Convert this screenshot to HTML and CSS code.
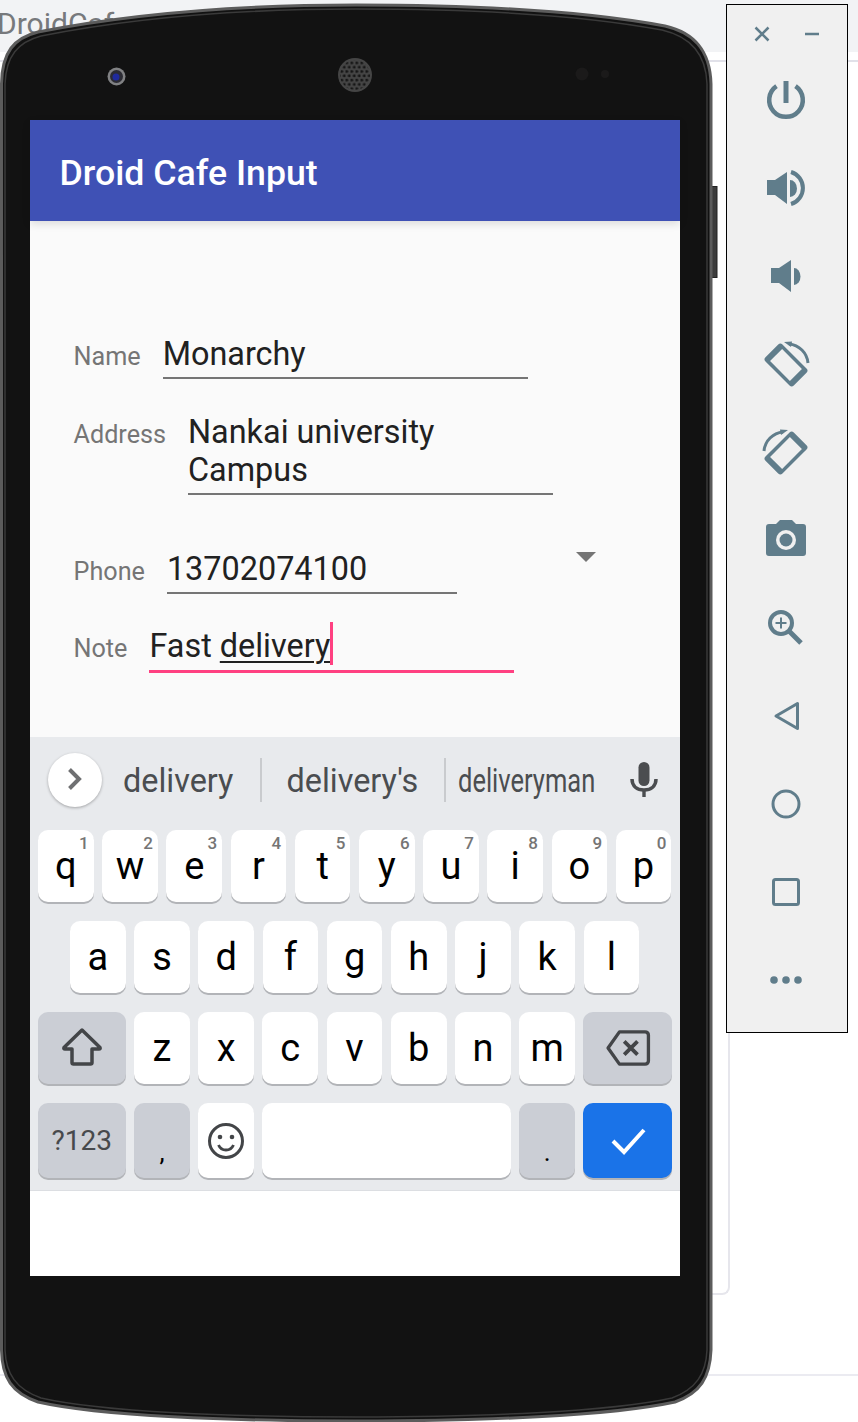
FILE: index.html
```html
<!DOCTYPE html>
<html lang="en">
<head>
  <meta charset="UTF-8">
  <meta name="viewport" content="width=device-width, initial-scale=1.0">
  <title>Droid Cafe Input</title>
  <link rel="stylesheet" href="styles.css">
</head>
<body>
  <!-- IDE behind the emulator -->
  <div class="backdrop-top"><span class="backdrop-title">DroidCafe</span></div>
  <div class="backdrop-rule"></div>
  <div class="backdrop-card"></div>
  <div class="backdrop-bottom"></div>

  <div class="phone">
    <svg class="phone-body" width="720" height="1422" viewBox="0 0 720 1422">
      <defs>
        <pattern id="grille" width="5" height="8.600" patternUnits="userSpaceOnUse" x="0.500" y="0.500">
          <circle cx="1.250" cy="2.150" r="1.500" fill="#161616"/>
          <circle cx="3.750" cy="6.450" r="1.500" fill="#161616"/>
        </pattern>
      </defs>
      <rect class="side-key" x="708" y="186.500" width="9" height="91"/>
      <path class="shell" d="M1.500 84C2 52 14 38 38 32C110 18 210 5 356 5C500 5 600 14 665 26C692 32 710 48 711 84V1350C710 1378 700 1393 675 1402C610 1416 480 1421 356 1421C230 1421 100 1416 38 1402C12 1393 2 1378 1.500 1350Z"/>
      <path class="shell-inner" d="M5 84C6 56 18 42 41 36C112 22 212 9 356 9C500 9 598 18 662 30C688 36 706 52 707 84V1350C706 1374 696 1389 672 1398C608 1412 480 1417 356 1417C232 1417 102 1412 41 1398C16 1389 6 1374 5 1350Z"/>
      <circle cx="116.500" cy="76.500" r="9" fill="#808183"/>
      <circle cx="116.500" cy="76.500" r="6.500" fill="#2b2b33"/>
      <circle cx="116" cy="77" r="3.500" fill="#1f2a9c"/>
      <circle cx="355" cy="75" r="17" fill="#454545"/>
      <circle cx="355" cy="75" r="15" fill="url(#grille)"/>
      <circle cx="582" cy="74" r="6.500" fill="#1b1a1a"/>
      <circle cx="605" cy="74" r="4" fill="#1b1a1a"/>
    </svg>

    <div class="screen">
      <header class="app-bar">Droid Cafe Input</header>

      <main class="form">
        <div class="form-row">
          <span class="form-label">Name</span>
          <div class="field">Monarchy</div>
        </div>
        <div class="form-row row-address">
          <span class="form-label">Address</span>
          <div class="field">Nankai university<br>Campus</div>
        </div>
        <div class="form-row row-phone">
          <span class="form-label">Phone</span>
          <div class="field field-short">13702074100</div>
          <span class="spinner-arrow"></span>
        </div>
        <div class="form-row row-note">
          <span class="form-label">Note</span>
          <div class="field field-active">Fast <span class="composing">delivery</span><span class="caret"></span></div>
        </div>
      </main>

      <section class="keyboard">
        <div class="suggest">
          <div class="suggest-toggle">
            <svg width="54" height="54" viewBox="0 0 54 54"><path d="M21.500 16.500L31 26L21.500 35.500" fill="none" stroke="#6f7072" stroke-width="4"/></svg>
          </div>
          <span class="word word-first">delivery</span>
          <span class="word-sep sep-first"></span>
          <span class="word word-second">delivery's</span>
          <span class="word-sep sep-second"></span>
          <span class="word word-squeezed"><span>deliveryman</span></span>
          <svg class="mic" width="30" height="38" viewBox="0 0 30 38">
            <rect x="9.500" y="1" width="11" height="24" rx="5.500" fill="#4b4d50"/>
            <path d="M3 18C3 25 8 29 15 29C22 29 27 25 27 18" fill="none" stroke="#4b4d50" stroke-width="3.500"/>
            <rect x="13.300" y="29" width="3.400" height="7" fill="#4b4d50"/>
          </svg>
        </div>

        <div class="key-rows">
          <div class="key-row">
            <div class="key">q<span class="hint">1</span></div>
            <div class="key">w<span class="hint">2</span></div>
            <div class="key">e<span class="hint">3</span></div>
            <div class="key">r<span class="hint">4</span></div>
            <div class="key">t<span class="hint">5</span></div>
            <div class="key">y<span class="hint">6</span></div>
            <div class="key">u<span class="hint">7</span></div>
            <div class="key">i<span class="hint">8</span></div>
            <div class="key">o<span class="hint">9</span></div>
            <div class="key">p<span class="hint">0</span></div>
          </div>
          <div class="key-row row-home">
            <div class="key">a</div>
            <div class="key">s</div>
            <div class="key">d</div>
            <div class="key">f</div>
            <div class="key">g</div>
            <div class="key">h</div>
            <div class="key">j</div>
            <div class="key">k</div>
            <div class="key">l</div>
          </div>
          <div class="key-row">
            <div class="key key-wide key-mod">
              <svg width="44" height="44" viewBox="0 0 44 44"><path d="M22 4L4 21.500C3.500 22.500 4 23 5 23H12V36.500C12 37.500 12.500 38 13.500 38H30.500C31.500 38 32 37.500 32 36.500V23H39C40 23 40.500 22.500 40 21.500Z" fill="none" stroke="#434548" stroke-width="3.500" stroke-linejoin="round"/></svg>
            </div>
            <div class="key">z</div>
            <div class="key">x</div>
            <div class="key">c</div>
            <div class="key">v</div>
            <div class="key">b</div>
            <div class="key">n</div>
            <div class="key">m</div>
            <div class="key key-wide key-end key-mod">
              <svg width="46" height="38" viewBox="0 0 48 40"><path d="M15 3H42C44 3 45.500 4.500 45.500 6.500V33.500C45.500 35.500 44 37 42 37H15L3 20Z" fill="none" stroke="#434548" stroke-width="3.500" stroke-linejoin="round"/><path d="M20 13L34 27M34 13L20 27" fill="none" stroke="#434548" stroke-width="4"/></svg>
            </div>
          </div>
          <div class="key-row row-bottom">
            <div class="key key-wide key-mod key-label">?123</div>
            <div class="key key-mod key-punct">,</div>
            <div class="key">
              <svg width="38" height="38" viewBox="0 0 38 38"><circle cx="19" cy="19" r="16.500" fill="none" stroke="#434548" stroke-width="3"/><circle cx="13" cy="15" r="2.300" fill="#434548"/><circle cx="25" cy="15" r="2.300" fill="#434548"/><path d="M11.500 23C13 26.500 16 28 19 28C22 28 25 26.500 26.500 23" fill="none" stroke="#434548" stroke-width="2.800"/></svg>
            </div>
            <div class="key key-space"></div>
            <div class="key key-mod key-punct">.</div>
            <div class="key key-wide key-end key-enter">
              <svg width="36" height="30" viewBox="0 0 36 30"><path d="M3 15L14 26L34 4" fill="none" stroke="#fff" stroke-width="4"/></svg>
            </div>
          </div>
        </div>
      </section>
    </div>
  </div>

  <aside class="emu-panel">
    <div class="emu-head">
      <svg class="emu-small" width="20" height="20" viewBox="0 0 20 20"><path d="M3.500 3.500L16.500 16.500M16.500 3.500L3.500 16.500"/></svg>
      <svg class="emu-small" width="20" height="20" viewBox="0 0 20 20"><path d="M3 10H17"/></svg>
    </div>
    <div class="emu-tools">
      <!-- power -->
      <svg class="tool" viewBox="0 0 48 48"><path class="line" stroke-width="4.500" d="M14.500 10.200A16.800 16.800 0 1 0 33.500 10.200"/><rect class="solid" x="21.500" y="5" width="5" height="22"/></svg>
      <!-- volume up -->
      <svg class="tool" viewBox="0 0 48 48"><path class="solid" d="M5 16H13L25 8V40L13 31H5Z"/><path class="solid" d="M28 16A7 8.500 0 0 1 28 33Z"/><path class="line" stroke-width="4" d="M29 8A16.700 16.700 0 0 1 29 40"/></svg>
      <!-- volume down -->
      <svg class="tool" viewBox="0 0 48 48"><path class="solid" d="M9 16H17L29 8V40L17 31H9Z"/><path class="solid" d="M32 16A6.500 8.500 0 0 1 32 33Z"/></svg>
      <!-- rotate left -->
      <svg class="tool" viewBox="0 0 48 48"><g transform="rotate(-45 24 25)"><rect class="solid" x="12" y="5" width="24" height="40" rx="3"/><rect class="hole" x="15.500" y="11" width="17" height="28"/></g><path class="line" stroke-width="3" d="M27 4A21 21 0 0 1 46 23"/><path class="solid" d="M22 2L30 1.500L29 7Z"/></svg>
      <!-- rotate right -->
      <svg class="tool" viewBox="0 0 48 48"><g transform="rotate(45 24 25)"><rect class="solid" x="12" y="5" width="24" height="40" rx="3"/><rect class="hole" x="15.500" y="11" width="17" height="28"/></g><path class="line" stroke-width="3" d="M2 23A21 21 0 0 1 21 4"/><path class="solid" d="M26 2L18 1.500L19 7Z"/></svg>
      <!-- camera -->
      <svg class="tool" viewBox="0 0 48 48"><path class="solid" d="M7 8H14L18 4H30L34 8H41C43 8 44 9 44 11V37C44 39 43 40 41 40H7C5 40 4 39 4 37V11C4 9 5 8 7 8Z"/><circle class="hole" cx="24" cy="24" r="10"/><circle class="solid" cx="24" cy="24" r="6.500"/></svg>
      <!-- zoom -->
      <svg class="tool" viewBox="0 0 48 48"><circle class="line" stroke-width="4" cx="19" cy="19" r="11"/><path class="line" stroke-width="2" d="M19 13.500V24.500M13.500 19H24.500"/><path class="line" stroke-width="5" d="M27.500 27.500L39 39"/></svg>
      <!-- back -->
      <svg class="tool" viewBox="0 0 48 48"><path class="line" stroke-width="3" stroke-linejoin="round" d="M14 24L35.500 11.500V36.500Z"/></svg>
      <!-- home -->
      <svg class="tool" viewBox="0 0 48 48"><circle class="line" stroke-width="3" cx="24" cy="24" r="13"/></svg>
      <!-- overview -->
      <svg class="tool" viewBox="0 0 48 48"><rect class="line" stroke-width="3" x="11.500" y="11.500" width="25" height="25" rx="2"/></svg>
      <!-- more -->
      <svg class="tool" viewBox="0 0 48 48"><circle class="solid" cx="12" cy="24" r="3.800"/><circle class="solid" cx="24" cy="24" r="3.800"/><circle class="solid" cx="36" cy="24" r="3.800"/></svg>
    </div>
  </aside>
</body>
</html>
```

FILE: styles.css
```css
html, body {
  margin: 0;
  padding: 0;
}

body {
  position: relative;
  width: 858px;
  height: 1422px;
  overflow: hidden;
  background: #fff;
  font-family: Roboto, "Liberation Sans", sans-serif;
}

/* ide behind the phone */
.backdrop-top {
  height: 52px;
  background: #f2f3f5;
  overflow: hidden;
}

.backdrop-title {
  display: block;
  margin-left: -3px;
  padding-top: 6px;
  font-size: 30px;
  line-height: 36px;
  color: #77797c;
}

.backdrop-rule {
  height: 2px;
  margin-top: 8px;
  background: #e1e1e9;
}

.backdrop-card {
  width: 728px;
  height: 1231px;
  border-right: 2px solid #e6e6ec;
  border-bottom: 2px solid #e6e6ec;
  border-bottom-right-radius: 8px;
}

.backdrop-bottom {
  height: 2px;
  margin-top: 79px;
  background: #ebebf1;
}

/* phone */
.phone {
  position: absolute;
  left: 0;
  top: 0;
  width: 720px;
  height: 1422px;
  padding: 120px 0 0 30px;
  box-sizing: border-box;
}

.phone-body {
  position: absolute;
  left: 0;
  top: 0;
}

.shell {
  fill: #121212;
  stroke: #5c5c5c;
  stroke-width: 3;
}

.shell-inner {
  fill: #121212;
  stroke: #3a3a3a;
  stroke-width: 1.5;
}

.side-key {
  fill: #3c3c3c;
  stroke: #222;
}

.screen {
  position: relative;
  width: 650px;
  height: 1156px;
  background: #fff;
}

.app-bar {
  position: relative;
  height: 101px;
  padding: 4px 0 0 29.5px;
  box-sizing: border-box;
  display: flex;
  align-items: center;
  background: #3f51b5;
  color: #fff;
  font-size: 35.7px;
  font-weight: 500;
  box-shadow: 0 3px 8px rgba(0, 0, 0, 0.12);
}

.form {
  height: 516px;
  padding: 113px 0 0 43.5px;
  box-sizing: border-box;
  background: #fafafa;
}

.form-row {
  display: flex;
  align-items: baseline;
  gap: 22px;
}

.row-address {
  margin-top: 33px;
}

.row-phone {
  margin-top: 54px;
}

.row-note {
  margin-top: 28px;
}

.form-label {
  font-size: 25.2px;
  color: #757575;
}

.field {
  width: 365px;
  padding: 1px 0 4px;
  box-sizing: border-box;
  border-bottom: 2px solid #757575;
  font-size: 32.4px;
  line-height: 38px;
  color: #212121;
}

.field-short {
  width: 290px;
}

.field-active {
  border-bottom: 3px solid #ff4081;
  padding: 0 0 5px;
}

.composing {
  text-decoration: underline;
  text-decoration-thickness: 2px;
  text-underline-offset: 4px;
}

.caret {
  display: inline-block;
  width: 3px;
  height: 43px;
  margin-right: -3px;
  vertical-align: -8px;
  background: #ff4081;
}

.spinner-arrow {
  align-self: flex-start;
  width: 0;
  height: 0;
  margin: 3px 0 0 97px;
  border-left: 10px solid transparent;
  border-right: 10px solid transparent;
  border-top: 10px solid #757575;
}

/* keyboard */
.keyboard {
  height: 453px;
  border-bottom: 1px solid #dcdee2;
  background: #e8eaed;
}

.suggest {
  height: 93px;
  padding: 0 0 7px 18px;
  box-sizing: border-box;
  display: flex;
  align-items: center;
  font-size: 32.4px;
  color: #4a4d50;
}

.suggest-toggle {
  width: 54px;
  height: 54px;
  flex: none;
  border-radius: 50%;
  background: #fff;
  box-shadow: 0 1px 3px rgba(0, 0, 0, 0.3);
}

.suggest-toggle svg {
  display: block;
}

.word {
  margin-top: 2px;
  white-space: nowrap;
}

.word-first {
  margin-left: 21px;
}

.word-sep {
  width: 2px;
  height: 44px;
  background: #c9cbce;
}

.sep-first {
  margin-left: 27px;
}

.word-second {
  margin-left: 24px;
}

.sep-second {
  margin-left: 26px;
}

.word-squeezed {
  width: 137px;
  margin-left: 12px;
}

.word-squeezed span {
  display: inline-block;
  transform: scaleX(0.787);
  transform-origin: left center;
}

.mic {
  margin-left: 34px;
}

.key-rows {
  display: flex;
  flex-direction: column;
  gap: 19px;
  padding: 0 8px;
}

.key-row {
  display: flex;
  gap: 8.5px;
  height: 72px;
}

.row-home {
  padding-left: 32px;
}

.row-bottom {
  height: 75px;
}

.key {
  position: relative;
  width: 55.7px;
  flex: none;
  display: flex;
  align-items: center;
  justify-content: center;
  border-radius: 10px;
  background: #fff;
  box-shadow: 0 2px 0 #b2b4b8;
  font-size: 38px;
  color: #000;
}

.key-wide {
  width: 87.6px;
}

.key-end {
  width: 88.5px;
}

.key-mod {
  background: #cbced5;
}

.key-space {
  width: 248.3px;
}

.key-enter {
  background: #1a73e8;
}

.key-label {
  font-size: 28px;
  color: #47494c;
}

.key-punct {
  align-items: flex-end;
  padding-bottom: 11px;
  box-sizing: border-box;
  font-size: 26px;
  line-height: 30px;
}

.hint {
  position: absolute;
  top: 2px;
  right: 5px;
  font-size: 17px;
  line-height: 22px;
  font-weight: 500;
  color: #757575;
}

/* emulator side panel */
.emu-panel {
  position: absolute;
  left: 726px;
  top: 4px;
  width: 122px;
  height: 1029px;
  box-sizing: border-box;
  border: 1px solid #000;
  background: #f0f0f0;
}

.emu-head {
  display: flex;
  justify-content: space-between;
  padding: 19px 25px 0;
  margin-bottom: 32px;
}

.emu-small {
  display: block;
  fill: none;
  stroke: #607d8b;
  stroke-width: 2.5;
}

.emu-tools {
  display: flex;
  flex-direction: column;
  align-items: center;
  gap: 40px;
  padding-right: 2px;
}

.tool {
  display: block;
  width: 48px;
  height: 48px;
  overflow: visible;
}

.tool .solid {
  fill: #607d8b;
}

.tool .line {
  fill: none;
  stroke: #607d8b;
}

.tool .hole {
  fill: #f0f0f0;
}
```
